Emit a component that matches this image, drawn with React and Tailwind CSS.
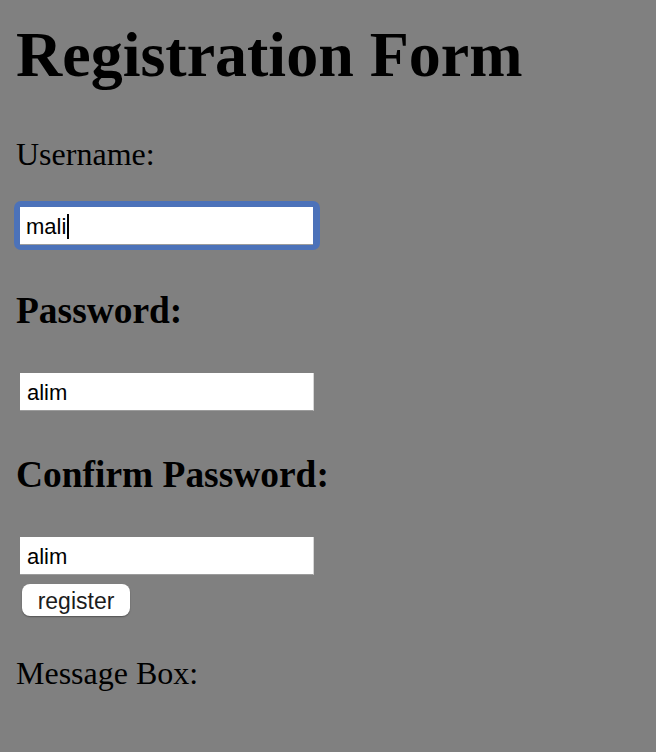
import React from 'react';

const serif = "font-['Liberation_Serif','Times_New_Roman',serif]";
const sans = "font-['Liberation_Sans',Arial,sans-serif]";

const Field = ({ value, className = '' }) => (
    <div className={`w-[294px] h-[38px] bg-white border-b border-b-[#9c9c9c] border-r border-r-[#d6d6d6] flex items-center pl-[7px] pt-[2px] text-[22px] text-black ${sans} ${className}`}>
        {value}
    </div>
);

const App = () => {
    return (
        <div className={`min-h-[752px] w-full bg-[#808080] text-black ${serif} flex flex-col items-start pl-[16px] pb-[40px]`}>
            <h1 className="mt-[18px] h-[74px] text-[64px] leading-[74px] font-bold whitespace-nowrap">Registration Form</h1>

            <p className="mt-[44px] h-[37px] text-[32px] leading-[37px]">Username:</p>

            {/* focused input with the blue ring */}
            <div className="mt-[28px] -ml-[2px] w-[306px] h-[49px] rounded-[7px] bg-[#4c72b9] pt-[6px] pl-[6px]">
                <div className={`w-[293px] h-[38px] bg-white border-b border-b-[#9c9c9c] flex items-center pl-[6px] pt-[2px] text-[22px] text-black ${sans}`}>
                    <span>mali</span>
                    <span className="ml-[1px] w-[2px] h-[25px] bg-black"></span>
                </div>
            </div>

            <h3 className="mt-[39px] h-[43px] text-[37.44px] leading-[43px] font-bold whitespace-nowrap">Password:</h3>
            <Field value="alim" className="mt-[41px] ml-[4px]" />

            <h3 className="mt-[42px] h-[43px] text-[37.44px] leading-[43px] font-bold whitespace-nowrap">Confirm Password:</h3>
            <Field value="alim" className="mt-[41px] ml-[4px]" />

            <button className={`mt-[9px] ml-[6px] w-[108px] h-[32px] rounded-[8px] bg-white shadow-[0_1px_1.5px_rgba(0,0,0,0.35)] text-[23px] leading-none pt-[3px] text-[#1c1c1c] ${sans} flex items-center justify-center`}>
                register
            </button>

            <p className="mt-[39px] h-[37px] text-[32px] leading-[37px]">Message Box:</p>
        </div>
    );
};

export default App;
